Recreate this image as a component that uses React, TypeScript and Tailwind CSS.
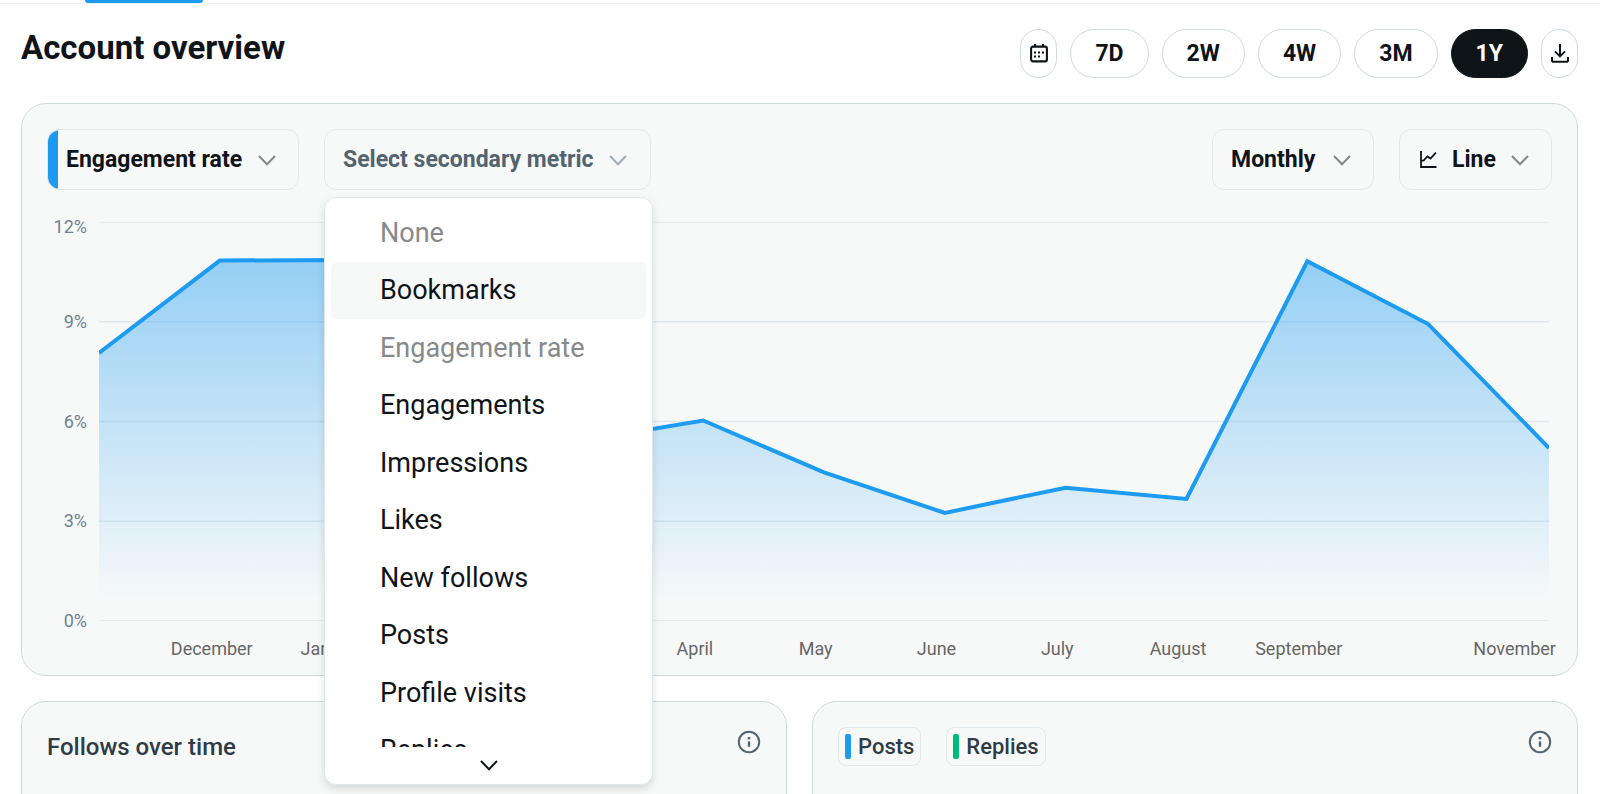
import { useState } from 'react';
import type { ReactNode } from 'react';
import { clsx } from 'clsx';

const METRICS = [
  { name: 'None', disabled: true },
  { name: 'Bookmarks' },
  { name: 'Engagement rate', disabled: true },
  { name: 'Engagements' },
  { name: 'Impressions' },
  { name: 'Likes' },
  { name: 'New follows' },
  { name: 'Posts' },
  { name: 'Profile visits' },
  { name: 'Replies' },
];

const RANGES = ['7D', '2W', '4W', '3M', '1Y'];

const Y_TICKS = ['12%', '9%', '6%', '3%', '0%'];

const X_TICKS = ['December', 'January', 'February', 'March', 'April', 'May', 'June', 'July', 'August', 'September', ''];

// monthly engagement rate in percent, November to November
const RATES = [8.06, 10.84, 10.86, 6.9, 5.42, 6.03, 4.47, 3.25, 4.01, 3.67, 10.82, 8.93, 5.2];

const POINTS = RATES.map((r, i) => [i * 100, (12 - r) * 100]);

function Chevron({ className }: { className?: string }) {
  return (
    <svg viewBox="0 0 18 11" className={clsx('h-[11px] w-[18px]', className)} fill="none" stroke="currentColor" strokeWidth="2" aria-hidden="true">
      <path d="M1 1l8 8.2L17 1" />
    </svg>
  );
}

function CalendarIcon() {
  return (
    <svg viewBox="0 0 18 19" className="h-[19px] w-[18px]" fill="none" stroke="currentColor" aria-hidden="true">
      <rect x="1.1" y="2.6" width="15.8" height="14.8" rx="1.8" strokeWidth="2.1" />
      <path d="M5 0v3M13 0v3" strokeWidth="2.2" />
      <path d="M4 8.6h2M8 8.6h2M12 8.6h2M4 12.6h2M8 12.6h2" strokeWidth="2" />
    </svg>
  );
}

function DownloadIcon() {
  return (
    <svg viewBox="0 0 18 19" className="h-[19px] w-[18px]" fill="none" stroke="currentColor" strokeWidth="2" aria-hidden="true">
      <path d="M9 0v12M4 7.4l5 5 5-5" />
      <path d="M1 13v3.2a1.6 1.6 0 001.6 1.6h12.8a1.6 1.6 0 001.6-1.6V13" />
    </svg>
  );
}

function LineChartIcon() {
  return (
    <svg viewBox="0 0 17 17" className="h-[17px] w-[17px]" fill="none" stroke="currentColor" strokeWidth="1.8" aria-hidden="true">
      <path d="M1 0v16h15.5" />
      <path d="M1.5 9.6h2l4-4.2 3 2.2 5.4-6" />
    </svg>
  );
}

function InfoButton({ label }: { label: string }) {
  return (
    <button type="button" aria-label={label} className="mt-[3px] text-[#536471]">
      <svg viewBox="0 0 24 24" className="h-6 w-6" fill="none" stroke="currentColor" strokeWidth="2" aria-hidden="true">
        <circle cx="12" cy="12" r="10.2" />
        <path d="M12 11.4v5.4" strokeWidth="2.4" />
        <path d="M12 7v2.4" strokeWidth="2.6" />
      </svg>
    </button>
  );
}

interface PickerProps {
  label: string;
  options: string[];
  className: string;
  icon?: ReactNode;
}

function Picker({ label, options, className, icon }: PickerProps) {
  return (
    <div className="relative">
      {icon}
      <select
        aria-label={label}
        className={clsx('h-[61px] appearance-none rounded-xl border border-[#e1e8eb] bg-transparent pt-[2px] text-[23px] font-bold text-[#0f1419]', className)}
      >
        {options.map((o) => (
          <option key={o}>{o}</option>
        ))}
      </select>
      <Chevron className="pointer-events-none absolute top-[26px] right-[23px] text-[#85898c]" />
    </div>
  );
}

function SecondaryMetric() {
  const [open, setOpen] = useState(true);
  const [active, setActive] = useState('Bookmarks');

  return (
    <div className="relative">
      <button
        type="button"
        aria-haspopup="listbox"
        aria-expanded={open}
        onClick={() => setOpen(!open)}
        className="flex h-[61px] w-[327px] items-center justify-between rounded-xl border border-[#e1e8eb] pt-[2px] pr-[23px] pl-[18px] text-[23px] font-bold text-[#536471]"
      >
        Select secondary metric
        <Chevron className="text-[#a3adb4]" />
      </button>
      {open && (
        <div className="absolute top-full left-0 z-10 mt-[7px] w-[329px] rounded-xl border border-[#e1e8eb] bg-white px-[6px] pt-[6px] shadow-[0_4px_8px_rgba(0,0,0,0.12)]">
          <div className="h-[543px] overflow-hidden">
            <ul role="listbox" aria-label="Secondary metric" className="grid h-[575px] auto-rows-fr">
              {METRICS.map((m) => (
                <li
                  key={m.name}
                  role="option"
                  aria-selected={active === m.name}
                  aria-disabled={m.disabled}
                  onMouseEnter={() => !m.disabled && setActive(m.name)}
                  className={clsx(
                    'flex items-center rounded-md pl-[49px] text-[27px]',
                    m.disabled ? 'text-[#87898c]' : 'text-[#0f1419]',
                    active === m.name && 'bg-[#f7f9f9]',
                  )}
                >
                  {m.name}
                </li>
              ))}
            </ul>
          </div>
          <div className="flex h-[37px] justify-center pt-[13px]">
            <Chevron className="text-[#0f1419]" />
          </div>
        </div>
      )}
    </div>
  );
}

function EngagementChart() {
  const line = POINTS.map(([x, y]) => `${x},${y}`).join(' ');

  return (
    <div className="mt-8 pr-[3px]">
      <div className="flex">
        <div className="flex h-[399px] w-[40px] flex-col justify-between text-right text-[18px] leading-none text-[#6e8293]">
          {Y_TICKS.map((t, i) => (
            <span key={t} className={clsx('flex items-center justify-end', i === 0 ? '-mb-[10px] h-[10px]' : 'h-0')}>
              {t}
            </span>
          ))}
        </div>
        <svg viewBox="0 0 1200 1200" preserveAspectRatio="none" className="ml-3 h-[399px] min-w-0 flex-1 overflow-hidden" aria-label="Engagement rate by month">
          <defs>
            <linearGradient id="rate-fill" x1="0" y1="0" x2="0" y2="1">
              <stop offset="0" stopColor="#1d9bf0" stopOpacity="0.45" />
              <stop offset="0.95" stopColor="#1d9bf0" stopOpacity="0" />
            </linearGradient>
          </defs>
          <g stroke="#e1e8eb" strokeWidth="1.5">
            {Y_TICKS.map((t, i) => (
              <line key={t} x1="0" x2="1200" y1={i * 300} y2={i * 300} vectorEffect="non-scaling-stroke" />
            ))}
          </g>
          <polygon points={`0,1200 ${line} 1200,1200`} fill="url(#rate-fill)" />
          <polyline points={line} fill="none" stroke="#1d9bf0" strokeWidth="4" vectorEffect="non-scaling-stroke" />
        </svg>
      </div>
      <div className="mt-[18px] -mr-[7px] ml-[44px] flex text-[18px] leading-5 text-[#666]">
        <span className="min-w-0 flex-1" />
        {X_TICKS.map((t) => (
          <span key={t} className="flex min-w-0 flex-2 justify-center">
            {t}
          </span>
        ))}
        <span className="flex w-[76px] shrink-0 justify-end">November</span>
      </div>
    </div>
  );
}

function Legend({ name, color }: { name: string; color: string }) {
  return (
    <span className="flex h-[39px] items-center gap-[7px] rounded-lg border border-[#e1e8eb] px-[6px] text-[22px] font-medium">
      <span className={clsx('h-[25px] w-[6px] rounded-xs', color)} />
      {name}
    </span>
  );
}

export default function App() {
  const [range, setRange] = useState('1Y');

  return (
    <div className="h-screen overflow-hidden bg-white font-['Roboto','Liberation_Sans',sans-serif] text-[#0f1419]">
      <div className="h-1 border-b border-[#eff3f4]">
        <div className="ml-[85px] h-[3px] w-[118px] rounded-b-sm bg-[#1d9bf0]" />
      </div>

      <main className="pt-[25px] pr-[22px] pl-[21px]">
        <header className="flex items-start justify-between">
          <h1 className="text-[33px] leading-[37px] font-bold">Account overview</h1>
          <div className="flex gap-[13px]">
            <button type="button" aria-label="Pick dates" className="flex h-[49px] w-[37px] items-center justify-center rounded-full border border-[#cfd9de]">
              <CalendarIcon />
            </button>
            {RANGES.map((r) => (
              <button
                key={r}
                type="button"
                aria-pressed={range === r}
                onClick={() => setRange(r)}
                className={clsx(
                  'h-[49px] rounded-full border px-6 pt-px text-[23px] font-bold',
                  range === r ? 'border-[#0f1419] bg-[#0f1419] text-white' : 'border-[#cfd9de]',
                )}
              >
                {r}
              </button>
            ))}
            <button type="button" aria-label="Download" className="flex h-[49px] w-[37px] items-center justify-center rounded-full border border-[#cfd9de]">
              <DownloadIcon />
            </button>
          </div>
        </header>

        <section className="mt-[25px] rounded-[25px] border border-[#cfd9de] bg-[#f7f9f9] px-[25px] pt-[25px] pb-4">
          <div className="flex justify-between">
            <div className="flex gap-[25px]">
              <Picker
                label="Primary metric"
                options={['Engagement rate', 'Impressions', 'Likes']}
                className="w-[252px] pl-[18px]"
                icon={
                  <span className="pointer-events-none absolute inset-y-px left-px w-[10px] overflow-hidden">
                    <span className="block h-full w-6 rounded-xl bg-[#1d9bf0]" />
                  </span>
                }
              />
              <SecondaryMetric />
            </div>
            <div className="flex gap-[25px]">
              <Picker label="Interval" options={['Monthly', 'Weekly', 'Daily']} className="w-[162px] pl-[18px]" />
              <Picker
                label="Chart type"
                options={['Line', 'Bar']}
                className="w-[153px] pl-[52px]"
                icon={
                  <span className="pointer-events-none absolute top-[22px] left-[21px]">
                    <LineChartIcon />
                  </span>
                }
              />
            </div>
          </div>
          <EngagementChart />
        </section>

        <div className="mt-[25px] grid grid-cols-2 gap-[25px] text-[#2f3b47]">
          <section className="flex h-[400px] items-start justify-between rounded-[25px] border border-[#cfd9de] bg-[#f7f9f9] p-[25px]">
            <h2 className="text-[24px] leading-10 font-medium">Follows over time</h2>
            <InfoButton label="About follows over time" />
          </section>
          <section className="flex h-[400px] items-start justify-between rounded-[25px] border border-[#cfd9de] bg-[#f7f9f9] p-[25px]">
            <div className="flex gap-[25px]">
              <Legend name="Posts" color="bg-[#1d9bf0]" />
              <Legend name="Replies" color="bg-[#00ba7c]" />
            </div>
            <InfoButton label="About posts and replies" />
          </section>
        </div>
      </main>
    </div>
  );
}
